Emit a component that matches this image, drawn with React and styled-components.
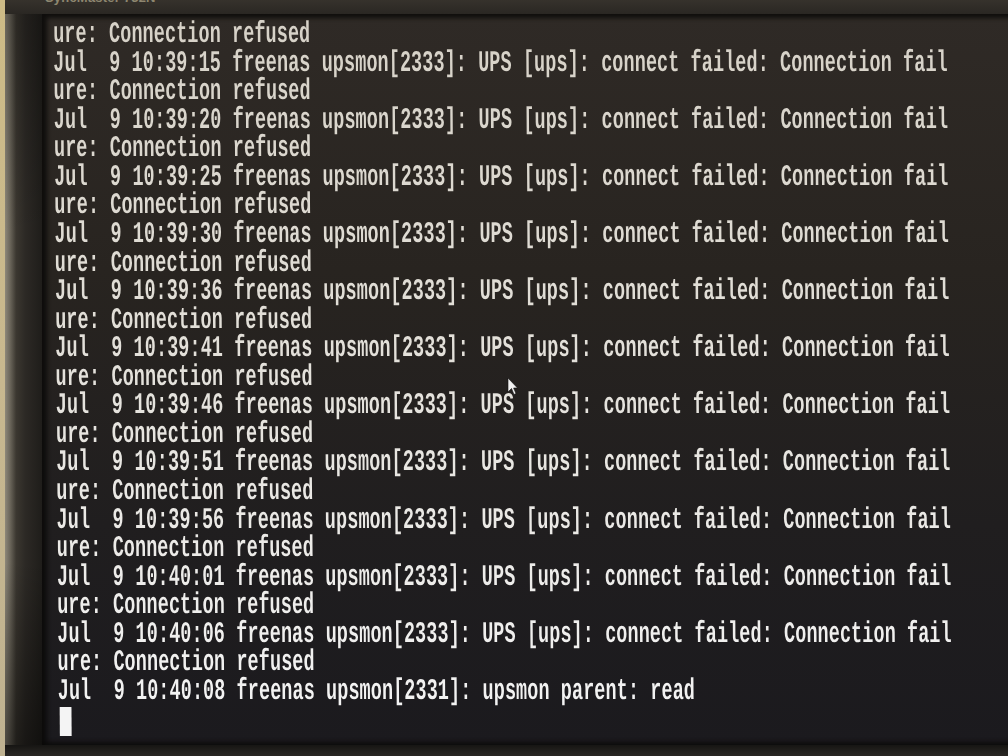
import styled, { createGlobalStyle } from 'styled-components';

const GlobalStyle = createGlobalStyle`
  html, body {
    margin: 0;
    padding: 0;
    background: #2c2925;
    overflow: hidden;
  }
`;

const Page = styled.div`
  display: flex;
  width: 1008px;
  height: 756px;
  overflow: hidden;
`;

const Wall = styled.div`
  width: ${(p) => p.$w}px;
  flex-shrink: 0;
  background: linear-gradient(180deg, #cdbb86 0%, #c8b88f 50%, #bfb291 100%);
`;

const Bezel = styled.div`
  flex: 1;
  display: flex;
  flex-direction: column;
  background: #2b2824;
`;

const BezelTop = styled.div`
  height: 14px;
  flex-shrink: 0;
  display: flex;
  justify-content: space-between;
  align-items: flex-start;
  padding: 0 70px 0 40px;
  overflow: hidden;
  background: linear-gradient(180deg, #36322c 0%, #2a2723 100%);
`;

const Label = styled.span`
  margin-top: -10px;
  font-family: 'Liberation Sans', Arial, sans-serif;
  font-weight: bold;
  font-size: 13px;
  color: #8e8770;
  letter-spacing: 0.2px;
`;

const PowerBox = styled.span`
  margin-top: -6px;
  width: 16px;
  height: 8px;
  border: 1px solid #6f6a5c;
  border-radius: 1px;
`;

const BezelMid = styled.div`
  flex: 1;
  display: flex;
  min-height: 0;
`;

const SideLeft = styled.div`
  width: 37px;
  flex-shrink: 0;
  background:
    linear-gradient(180deg, rgba(0, 0, 0, 0.25) 0%, rgba(0, 0, 0, 0) 30%, rgba(0, 0, 0, 0) 75%, rgba(0, 0, 0, 0.45) 100%),
    linear-gradient(90deg, #8e887a 0%, #6a655a 14%, #3b3730 30%, #2c2925 55%, #1f1d1a 100%);
`;

const SideRight = styled.div`
  width: 45px;
  flex-shrink: 0;
  background: linear-gradient(
    90deg,
    #141210 0%,
    #1a1816 10%,
    #857f70 14%,
    #5a564c 19%,
    #2a2723 24%,
    #2d2a26 100%
  );
`;

const BezelBottom = styled.div`
  height: 11px;
  flex-shrink: 0;
  background: linear-gradient(180deg, #161513 0%, #23211e 60%, #2a2724 100%);
`;

const Screen = styled.div`
  position: relative;
  flex: 1;
  overflow: hidden;
  padding: 6px 0 0 11px;
  background: linear-gradient(180deg, #2f2a26 0%, #282420 35%, #201e1f 70%, #1b1a1e 100%);
  box-shadow: inset 5px 4px 4px rgba(10, 9, 8, 0.85), inset -3px -3px 4px rgba(10, 9, 8, 0.8);
`;

const Console = styled.div`
  transform-origin: left top;
  transform: skewX(0.4deg) scaleX(0.621);
  font-family: 'Liberation Mono', 'Courier New', monospace;
  font-weight: bold;
  font-size: 30px;
  line-height: 28.57px;
  white-space: pre;
  width: 1500px;
`;

const Lines = styled.div`
  background: linear-gradient(180deg, #d6d1c7 0%, #e2dfd8 45%, #f3f3f3 100%);
  -webkit-background-clip: text;
  background-clip: text;
  color: transparent;
`;

const Line = styled.div`
  height: 28.57px;
`;

const Cursor = styled.div`
  width: 19px;
  height: 29px;
  margin: 1px 0 0 3px;
  background: #f4f4f4;
`;

const Pointer = styled.svg`
  position: absolute;
  left: 465px;
  top: 363px;
`;

const times = ['39:15', '39:20', '39:25', '39:30', '39:36', '39:41', '39:46', '39:51', '39:56', '40:01', '40:06'];

const lines = ['ure: Connection refused'];
times.forEach((t) => {
  lines.push(`Jul  9 10:${t} freenas upsmon[2333]: UPS [ups]: connect failed: Connection fail`);
  lines.push('ure: Connection refused');
});
lines.push('Jul  9 10:40:08 freenas upsmon[2331]: upsmon parent: read');

export default function App() {
  return (
    <>
      <GlobalStyle />
      <Page>
        <Wall $w={5} />
        <Bezel>
          <BezelTop>
            <Label>SyncMaster 732N</Label>
            <PowerBox />
          </BezelTop>
          <BezelMid>
            <SideLeft />
            <Screen>
              <Console>
                <Lines>
                  {lines.map((l, i) => (
                    <Line key={i}>{l}</Line>
                  ))}
                </Lines>
                <Cursor />
              </Console>
              <Pointer width="11" height="19" viewBox="0 0 11 19">
                <path d="M1 1 L1 15 L4.5 11.5 L7 17.5 L9 16.6 L6.6 11 L10.5 11 Z" fill="#f2f2f2" stroke="#111" strokeWidth="0.6" />
              </Pointer>
            </Screen>
            <SideRight />
          </BezelMid>
          <BezelBottom />
        </Bezel>
        <Wall $w={8} />
      </Page>
    </>
  );
}
